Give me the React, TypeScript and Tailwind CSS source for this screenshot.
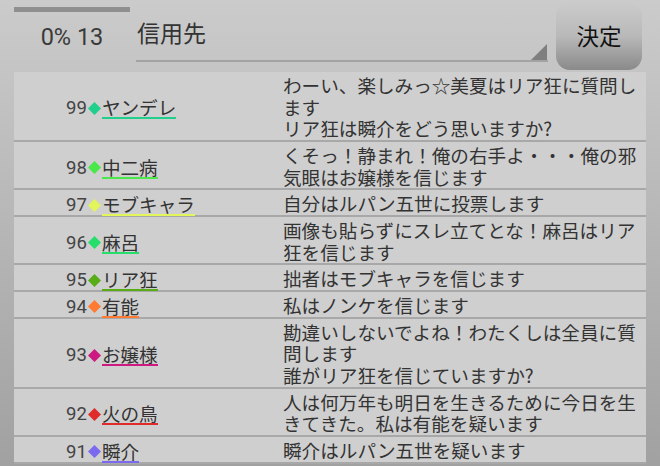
import React from 'react'

interface Row {
  n: number
  name: string
  color: string
  msg: string
}

const rows: Row[] = [
  { n: 99, name: 'ヤンデレ', color: '#1fcf8b', msg: 'わーい、楽しみっ☆美夏はリア狂に質問します\nリア狂は瞬介をどう思いますか?' },
  { n: 98, name: '中二病', color: '#4be84b', msg: 'くそっ！静まれ！俺の右手よ・・・俺の邪気眼はお嬢様を信じます' },
  { n: 97, name: 'モブキャラ', color: '#e2f55a', msg: '自分はルパン五世に投票します' },
  { n: 96, name: '麻呂', color: '#26de6c', msg: '画像も貼らずにスレ立てとな！麻呂はリア狂を信じます' },
  { n: 95, name: 'リア狂', color: '#58ac16', msg: '拙者はモブキャラを信じます' },
  { n: 94, name: '有能', color: '#ff7a33', msg: '私はノンケを信じます' },
  { n: 93, name: 'お嬢様', color: '#cc1a80', msg: '勘違いしないでよね！わたくしは全員に質問します\n誰がリア狂を信じていますか?' },
  { n: 92, name: '火の鳥', color: '#e02b2b', msg: '人は何万年も明日を生きるために今日を生きてきた。私は有能を疑います' },
  { n: 91, name: '瞬介', color: '#7b6af0', msg: '瞬介はルパン五世を疑います' },
]

const cjk = "font-['Noto_Sans_CJK_JP',sans-serif]"

export default function App() {
  return (
    <div
      lang="ja"
      className={`w-[660px] h-[466px] overflow-hidden bg-linear-to-b from-[#cbcbcb] to-[#a1a1a1] text-[#333] ${cjk}`}
    >
      {/* Header */}
      <div className="flex h-[72px] pl-[14px]">
        <div className="w-[116px] flex flex-col">
          <div className="mt-[7px] h-[5px] bg-[#8f8f8f]"></div>
          <div className="mt-[13px] text-center font-['Roboto',sans-serif] text-[23.5px] leading-[24px] text-[#3a3a3a]">
            0% 13
          </div>
        </div>
        <div className="relative ml-[6px] w-[412px] h-[62px] border-b-2 border-[#a3a3a3]">
          <div className="pt-[21px] pl-[1px] text-[23px] leading-[23px]">信用先</div>
          <svg className="absolute right-[1px] bottom-0" width="16" height="16" viewBox="0 0 16 16">
            <polygon points="16,0 16,16 0,16" fill="#7f7f7f" />
          </svg>
        </div>
        <div className="ml-[8px] mt-[2px] w-[86px] h-[68px] rounded-[14px] bg-linear-to-b from-[#cbcbcb] via-[#b9b9b9] to-[#8a8a8a] flex items-center justify-center text-[22.5px] text-[#111]">
          決定
        </div>
      </div>

      {/* List */}
      <div className="mx-[14px] bg-[#cfcfcf]">
        {rows.map((row) => (
          <div key={row.n} className="flex border-b-2 border-[#a8a8a8] pt-[1.75px] pb-[1px]">
            <div className="w-[269px] shrink-0 pl-[52px] flex items-center">
              <div className="flex items-center translate-y-[2px]">
                <span className="font-['Roboto',sans-serif] text-[18.6px] leading-[20px] text-[#444]">{row.n}</span>
                <svg className="ml-[1px]" width="13" height="13" viewBox="0 0 13 13">
                  <polygon points="6.5,0 13,6.5 6.5,13 0,6.5" fill={row.color} />
                </svg>
                <span
                  className="ml-[1px] text-[18.6px] leading-[20px] border-b-2"
                  style={{ borderColor: row.color }}
                >
                  {row.name}
                </span>
              </div>
            </div>
            <div className="flex-1 whitespace-pre-line text-[18.6px] leading-[21.75px]">{row.msg}</div>
          </div>
        ))}
      </div>
    </div>
  )
}
